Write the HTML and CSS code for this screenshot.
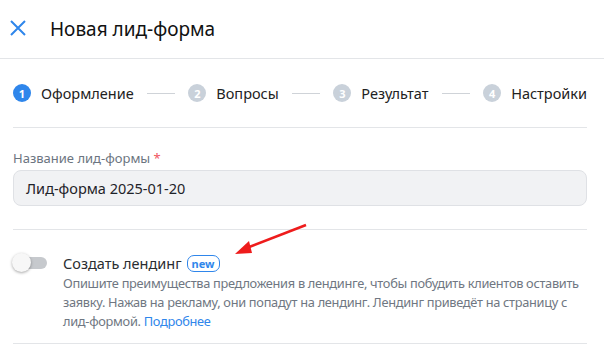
FILE: index.html
```html
<!DOCTYPE html>
<html lang="ru">
<head>
    <meta charset="UTF-8">
    <title>Новая лид-форма</title>
    <link rel="stylesheet" href="styles.css">
</head>
<body>
    <header class="top">
        <svg class="close" width="16" height="16" viewBox="0 0 16 16">
            <path d="M1 1 L15 15 M15 1 L1 15" stroke="#2f86eb" stroke-width="2" fill="none"/>
        </svg>
        <h1>Новая лид-форма</h1>
    </header>

    <div class="content">
        <div class="steps">
            <div class="step active"><span class="num">1</span>Оформление</div>
            <div class="sep"></div>
            <div class="step"><span class="num">2</span>Вопросы</div>
            <div class="sep"></div>
            <div class="step"><span class="num">3</span>Результат</div>
            <div class="sep"></div>
            <div class="step"><span class="num">4</span>Настройки</div>
        </div>

        <div class="section">
            <label class="field-label">Название лид-формы <span class="req">*</span></label>
            <div class="input">Лид-форма 2025-01-20</div>
        </div>

        <div class="section landing">
            <div class="toggle"><span class="knob"></span></div>
            <div class="landing-text">
                <div class="landing-title">Создать лендинг <span class="badge">new</span></div>
                <p class="hint">Опишите преимущества предложения в лендинге, чтобы побудить клиентов оставить заявку. Нажав на рекламу, они попадут на лендинг. Лендинг приведёт на страницу с лид-формой. <a href="#">Подробнее</a></p>
            </div>
        </div>
    </div>

    <svg class="arrow" width="80" height="40" viewBox="0 0 80 40">
        <path d="M74 2 L12 26" stroke="#ee1c1c" stroke-width="2.5" fill="none"/>
        <path d="M3 31 L17 18 L20 30 Z" fill="#ee1c1c"/>
    </svg>
</body>
</html>
```

FILE: styles.css
```css
body {
    margin: 0;
    font-family: "Noto Sans", "Open Sans", sans-serif;
    background: #fff;
    color: #1f2329;
    position: relative;
}
.top {
    display: flex;
    align-items: center;
    height: 58px;
    padding-left: 10px;
    border-bottom: 1px solid #e3e5e8;
}
.close {
    margin-right: 24px;
    margin-top: -2px;
}
h1 {
    margin: 0;
    font-size: 19px;
    font-weight: 400;
    color: #111;
}
.content {
    padding: 0 17px 0 13px;
}
.steps {
    display: flex;
    align-items: center;
    height: 68px;
    border-bottom: 1px solid #e3e5e8;
    font-size: 14.5px;
    color: #222;
}
.step {
    display: flex;
    align-items: center;
    white-space: nowrap;
}
.num {
    width: 18px;
    height: 18px;
    border-radius: 50%;
    background: #c9d1da;
    color: #fff;
    font-size: 11px;
    font-weight: 700;
    display: flex;
    align-items: center;
    justify-content: center;
    margin-right: 10px;
}
.step.active .num {
    background: #2f86eb;
}
.sep {
    flex: 1;
    height: 1px;
    background: #cfd3d8;
    margin: 0 13px;
}
.section {
    border-bottom: 1px solid #e3e5e8;
}
.field-label {
    display: block;
    padding-top: 21px;
    font-size: 13px;
    color: #6b7480;
    margin-bottom: 3px;
}
.req {
    color: #f0555f;
}
.input {
    height: 34px;
    line-height: 34px;
    background: #f1f2f4;
    border: 1px solid #dfe1e5;
    border-radius: 8px;
    padding-left: 12px;
    font-size: 14.5px;
    color: #1f2329;
    margin-bottom: 23px;
}
.landing {
    display: flex;
    padding-top: 22px;
    padding-bottom: 12px;
}
.toggle {
    position: relative;
    width: 34px;
    height: 12px;
    border-radius: 6px;
    background: #c6c9cd;
    margin-top: 5px;
    margin-right: 16px;
    flex-shrink: 0;
}
.knob {
    position: absolute;
    left: -1px;
    top: -4px;
    width: 19px;
    height: 19px;
    border-radius: 50%;
    background: #f7f7f7;
    box-shadow: 0 1px 3px rgba(0, 0, 0, 0.35);
}
.landing-title {
    font-size: 14.5px;
    color: #2a2d31;
    display: flex;
    align-items: center;
    height: 22px;
}
.badge {
    margin-left: 5px;
    border: 1px solid #2f86eb;
    border-radius: 7px;
    color: #2f86eb;
    font-size: 11px;
    font-weight: 700;
    padding: 0 4px;
    line-height: 15px;
}
.hint {
    margin: 0;
    font-size: 12.8px;
    letter-spacing: -0.3px;
    line-height: 19px;
    color: #6f7782;
}
.hint a {
    color: #2f86eb;
    text-decoration: none;
}
.arrow {
    position: absolute;
    left: 232px;
    top: 223px;
}
```
